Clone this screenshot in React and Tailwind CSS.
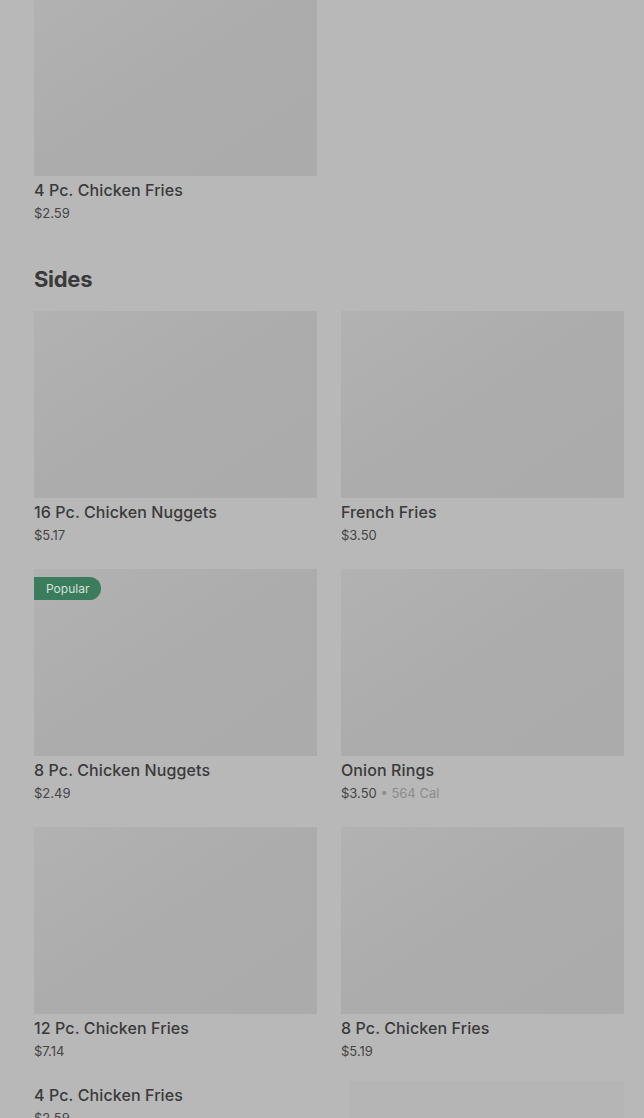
const font = { fontFamily: "Inter, 'Noto Sans', sans-serif" };

function Card({ name, price, cal, popular, noImage, faded }) {
  return (
    <div className="flex flex-col">
      {noImage ? null : (
        <div
          className={`relative h-[187px] ${
            faded
              ? "bg-[#b5b5b5] ml-[8px]"
              : "w-full bg-gradient-to-br from-[#b2b2b2] via-[#acacac] to-[#ababab]"
          }`}
        >
          {popular && (
            <span className="absolute left-0 top-[8px] h-[23px] pl-[12px] pr-[12px] flex items-center rounded-r-full bg-[#3b7c5d] text-[12px] text-[#d4e2da]">
              Popular
            </span>
          )}
        </div>
      )}
      {name && (
        <div className={noImage ? "mt-[1px]" : "mt-[4px]"}>
          <div className="text-[16px] leading-[20px] font-medium text-[#3a3a3a] tracking-[0.1px]">
            {name}
          </div>
          <div className="mt-[3px] text-[13px] leading-[20px] text-[#454545]">
            {price}
            {cal && <span className="text-[#8c8c8c]"> • {cal}</span>}
          </div>
        </div>
      )}
    </div>
  );
}

export default function App() {
  const sides = [
    { name: "16 Pc. Chicken Nuggets", price: "$5.17" },
    { name: "French Fries", price: "$3.50" },
    { name: "8 Pc. Chicken Nuggets", price: "$2.49", popular: true },
    { name: "Onion Rings", price: "$3.50", cal: "564 Cal" },
    { name: "12 Pc. Chicken Fries", price: "$7.14" },
    { name: "8 Pc. Chicken Fries", price: "$5.19" },
  ];

  return (
    <div className="h-[1118px] overflow-hidden bg-[#b8b8b8]" style={font}>
      <div className="pl-[34px] pr-[20px] -mt-[11px]">
        {/* previous section tail */}
        <div className="grid grid-cols-2 gap-x-[24px]">
          <Card name="4 Pc. Chicken Fries" price="$2.59" />
        </div>

        {/* SIDES */}
        <h2 className="mt-[42px] text-[22px] leading-[28px] font-bold text-[#3a3a3a] tracking-[-0.3px]">
          Sides
        </h2>

        <div className="mt-[18px] grid grid-cols-2 gap-x-[24px] gap-y-[24px]">
          {sides.map((s) => (
            <Card key={s.name} {...s} />
          ))}
        </div>

        <div className="mt-[20px] grid grid-cols-2 gap-x-[24px] items-start">
          <div className="pt-[3px]">
            <Card name="4 Pc. Chicken Fries" price="$2.59" noImage />
          </div>
          <Card faded />
        </div>
      </div>
    </div>
  );
}
